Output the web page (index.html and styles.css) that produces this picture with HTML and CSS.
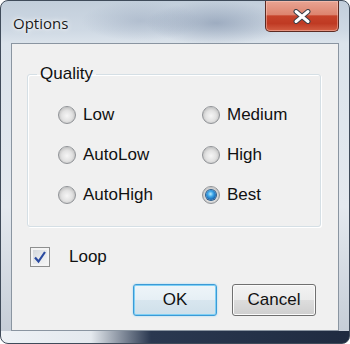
FILE: index.html
```html
<!DOCTYPE html>
<html lang="en">
<head>
    <meta charset="UTF-8">
    <title>Options</title>
    <link rel="stylesheet" href="styles.css">
</head>
<body>
    <div class="window">
        <div class="titlebar">
            <span class="title">Options</span>
            <button class="close-btn" title="Close">
                <svg width="20" height="15" viewBox="0 0 20 15">
                    <path d="M4 2.5 L16 12.5 M16 2.5 L4 12.5" stroke="#3a3f48" stroke-width="5" stroke-linecap="round"/>
                    <path d="M4 2.5 L16 12.5 M16 2.5 L4 12.5" stroke="#ffffff" stroke-width="3" stroke-linecap="round"/>
                </svg>
            </button>
        </div>

        <div class="client">
            <fieldset class="quality">
                <legend>Quality</legend>
                <div class="radio-grid">
                    <label class="radio"><span class="radio-dot"></span>Low</label>
                    <label class="radio"><span class="radio-dot"></span>Medium</label>
                    <label class="radio"><span class="radio-dot"></span>AutoLow</label>
                    <label class="radio"><span class="radio-dot"></span>High</label>
                    <label class="radio"><span class="radio-dot"></span>AutoHigh</label>
                    <label class="radio"><span class="radio-dot checked"></span>Best</label>
                </div>
            </fieldset>

            <label class="check-row">
                <span class="check-box">
                    <svg width="14" height="14" viewBox="0 0 14 14">
                        <path d="M2 7.5 L5.5 11.5 L12 2" fill="none" stroke="#2a4aa0" stroke-width="2.2"/>
                    </svg>
                </span>
                Loop
            </label>

            <div class="buttons">
                <button class="btn btn-default">OK</button>
                <button class="btn">Cancel</button>
            </div>
        </div>
    </div>
</body>
</html>
```

FILE: styles.css
```css
/* General styles */
body {
    margin: 0;
    background-color: #ffffff;
    font-family: "Liberation Sans", Arial, sans-serif;
    color: #111111;
}

/* Window frame */
.window {
    width: 350px;
    height: 344px;
    box-sizing: border-box;
    border: 1px solid #3f4b5a;
    border-radius: 8px;
    padding: 0 10px 12px;
    display: flex;
    flex-direction: column;
    background:
        linear-gradient(90deg, #eef2f6 0, #e4e9ee 90px, #2a3850 150px, #1f2b40 100%) left bottom / 100% 12px no-repeat,
        radial-gradient(ellipse 70px 22px at 215px 22px, rgba(120, 138, 165, 0.55), rgba(120, 138, 165, 0)) no-repeat,
        radial-gradient(ellipse 60px 20px at 140px 20px, rgba(140, 156, 180, 0.4), rgba(140, 156, 180, 0)) no-repeat,
        linear-gradient(180deg, #c2cedb 0, #cfd9e4 30px, #dbe3eb 42px, #e4e9ef 60%, #c3cbd5 100%);
}

.titlebar {
    height: 42px;
    display: flex;
    justify-content: space-between;
    align-items: flex-start;
}

.title {
    margin: 12px 0 0 2px;
    font-family: "Open Sans", "Liberation Sans", sans-serif;
    font-size: 15px;
    color: #1a1a1a;
    text-shadow: 0 0 6px #ffffff, 0 0 3px #ffffff;
}

.close-btn {
    width: 74px;
    height: 31px;
    padding: 0;
    display: flex;
    align-items: center;
    justify-content: center;
    border: 1px solid #5c2a22;
    border-top: none;
    border-radius: 0 0 5px 5px;
    background: linear-gradient(180deg, #e8a493 0, #dd846f 45%, #c6422a 50%, #bf3a23 75%, #d45f44 100%);
    box-shadow: inset 0 0 0 1px rgba(255, 210, 200, 0.45);
}

/* Client area */
.client {
    flex: 1;
    border: 1px solid #8a95a1;
    background-color: #f0f0f0;
    display: flex;
    flex-direction: column;
}

/* Group box */
.quality {
    margin: 20px 17px 0 15px;
    padding: 0 0 11px 9px;
    border: 1px solid #d5dfe5;
    border-radius: 3px;
    box-shadow: inset 1px 1px 0 #ffffff, 1px 1px 0 #ffffff;
}

.quality legend {
    padding: 0 3px;
    font-size: 17px;
    line-height: 20px;
}

.radio-grid {
    margin-left: 21px;
    padding-top: 11px;
    display: grid;
    grid-template-columns: 144px 1fr;
    grid-auto-rows: 40px;
}

.radio {
    display: flex;
    align-items: center;
    font-size: 17px;
    line-height: 20px;
}

.radio-dot {
    width: 18px;
    height: 18px;
    box-sizing: border-box;
    margin-right: 7px;
    border: 1px solid #8f9296;
    border-radius: 50%;
    background: radial-gradient(circle at 50% 55%, #f6f6f6 0, #e2e2e2 45%, #c6c6c6 70%, #f4f4f4 74%, #f4f4f4 100%);
    display: flex;
    align-items: center;
    justify-content: center;
}

.radio-dot.checked::after {
    content: "";
    width: 10px;
    height: 10px;
    border-radius: 50%;
    background: radial-gradient(circle at 45% 40%, #b8ecff 0, #3ba3e6 35%, #145ca6 75%, #0b3f78 100%);
    box-shadow: 0 0 0 1px #2b5d8c;
}

/* Checkbox */
.check-row {
    margin: 20px 0 0 18px;
    display: flex;
    align-items: center;
    gap: 19px;
    font-size: 17px;
    line-height: 20px;
}

.check-box {
    width: 20px;
    height: 20px;
    box-sizing: border-box;
    border: 1px solid #8e8f8f;
    background: linear-gradient(135deg, #cfd3d8 0, #e6e8ea 50%, #f8f8f8 100%);
    box-shadow: inset 0 0 0 2px #f4f4f4;
    display: flex;
    align-items: center;
    justify-content: center;
}

/* Buttons */
.buttons {
    margin-top: 17px;
    padding-right: 22px;
    display: flex;
    justify-content: flex-end;
    gap: 15px;
}

.btn {
    width: 84px;
    height: 32px;
    padding: 0;
    font-family: "Liberation Sans", Arial, sans-serif;
    font-size: 17px;
    color: #111111;
    border: 1px solid #707070;
    border-radius: 3px;
    background: linear-gradient(180deg, #f2f2f2 0, #ebebeb 50%, #dddddd 50%, #cfcfcf 100%);
    box-shadow: inset 0 0 0 1px #fbfbfb;
}

.btn-default {
    border-color: #3c9ad6;
    background: linear-gradient(180deg, #eef5f9 0, #e6eff5 50%, #d8e6ef 50%, #cfe0ea 100%);
    box-shadow: inset 0 0 0 1px #7fd0f5, 0 0 2px #8fd6f7;
}
```
